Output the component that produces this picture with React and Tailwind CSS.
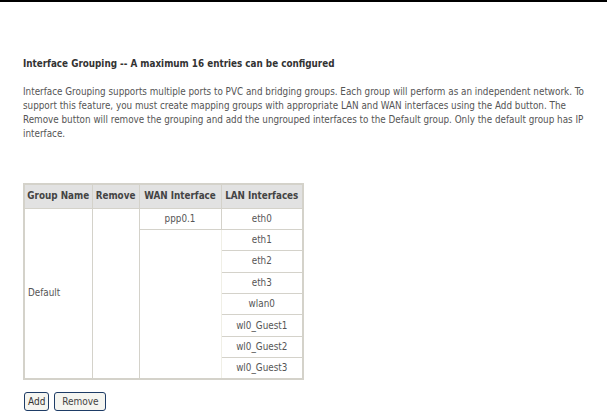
import React from "react";

const lan = ["eth0", "eth1", "eth2", "eth3", "wlan0", "wl0_Guest1", "wl0_Guest2", "wl0_Guest3"];

const font = { fontFamily: '"DejaVu Sans Condensed", "DejaVu Sans", Tahoma, sans-serif' };

export default function App() {
  return (
    <div className="w-[607px] h-[414px] bg-white text-[#555] text-[9.8px] leading-[14px]" style={font}>
      <div className="h-[2px] bg-black" />
      <div className="pl-[23px] pt-[55px]">
        <div className="font-bold text-[#333]">Interface Grouping -- A maximum 16 entries can be configured</div>
        <p className="mt-[14px] whitespace-nowrap">
          Interface Grouping supports multiple ports to PVC and bridging groups. Each group will perform as an independent network. To<br />
          support this feature, you must create mapping groups with appropriate LAN and WAN interfaces using the Add button. The<br />
          Remove button will remove the grouping and add the ungrouped interfaces to the Default group. Only the default group has IP<br />
          interface.
        </p>

        <table className="mt-[42px] border-collapse border-2 border-[#d4d2ca] text-[#555]">
          <thead>
            <tr className="bg-[#e2e2e2] h-[24px]">
              <th className="w-[68px] border border-[#d4d2ca] font-bold text-[#444] px-[2px] whitespace-nowrap">Group Name</th>
              <th className="w-[47px] border border-[#d4d2ca] font-bold text-[#444] px-[2px]">Remove</th>
              <th className="w-[82px] border border-[#d4d2ca] font-bold text-[#444] px-[2px] whitespace-nowrap">WAN Interface</th>
              <th className="w-[82px] border border-[#d4d2ca] font-bold text-[#444] px-[2px] whitespace-nowrap">LAN Interfaces</th>
            </tr>
          </thead>
          <tbody>
            {lan.map((name, i) => (
              <tr key={name} className="h-[21.4px]">
                {i === 0 && (
                  <>
                    <td rowSpan={8} className="border border-[#d4d2ca] align-middle px-[3px] text-left">Default</td>
                    <td rowSpan={8} className="border border-[#d4d2ca]"></td>
                    <td className="border border-[#d4d2ca] text-center">ppp0.1</td>
                  </>
                )}
                {i === 1 && <td rowSpan={7} className="border border-[#f0efe6]"></td>}
                <td className="border border-[#d4d2ca] text-center">{name}</td>
              </tr>
            ))}
          </tbody>
        </table>

        <div className="mt-[12px] flex gap-[5px] pl-px">
          <button className="h-[19px] px-[3px] rounded-[3px] border border-[#1e3c66] bg-[#f5f5f0] text-[#333] text-[10px] leading-none" style={font}>Add</button>
          <button className="h-[19px] w-[52px] rounded-[3px] border border-[#1e3c66] bg-[#f5f5f0] text-[#444] text-[10px] leading-none" style={font}>Remove</button>
        </div>
      </div>
    </div>
  );
}
